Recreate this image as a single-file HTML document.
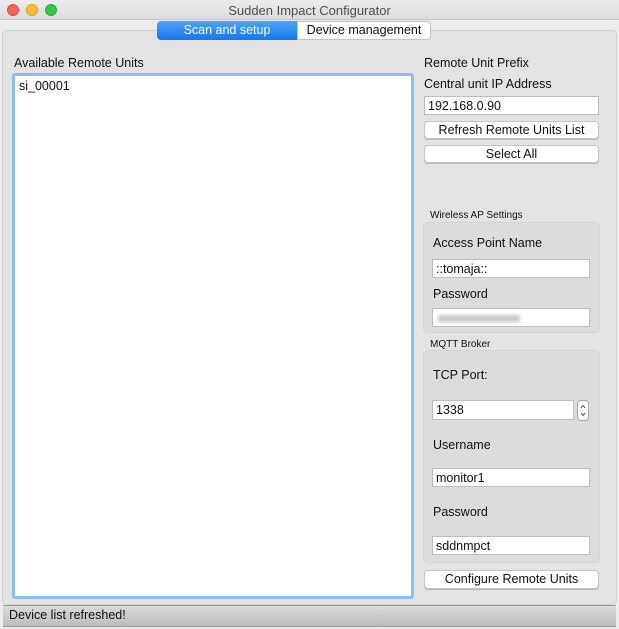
<!DOCTYPE html>
<html><head><style>
*{margin:0;padding:0;box-sizing:border-box}
body{width:619px;height:629px;background:#ececec;font-family:"Liberation Sans",sans-serif;font-size:12.5px;color:#111;position:relative;overflow:hidden}
.a{position:absolute;white-space:nowrap}
.dot{position:absolute;width:12px;height:12px;border-radius:50%;top:4px}
.in{position:absolute;background:#fff;border:1px solid #bdbdbd;padding:1px 0 0 3px;font-size:12.5px;line-height:16px}
.btn{position:absolute;background:#fff;border:1px solid #c4c4c4;border-radius:4px;text-align:center;font-size:12.5px;line-height:16px;box-shadow:0 1px 0 #bbb}
.grp{position:absolute;background:#dcdcdc;border:1px solid #d2d2d2;border-radius:5px}
.sm{font-size:10px}
</style></head><body>
<div class="a" style="left:0;top:0;width:619px;height:20px;background:linear-gradient(#ececec,#dcdcdc);border-bottom:1px solid #c8c8c8"></div>
<div class="dot" style="left:7px;background:#fc5f57;border:1px solid #de4a42"></div>
<div class="dot" style="left:26px;background:#fdbc2e;border:1px solid #dea123"></div>
<div class="dot" style="left:45px;background:#33c748;border:1px solid #27aa35"></div>
<div class="a" style="left:0;width:619px;top:3px;text-align:center;color:#4d4d4d;font-size:13px">Sudden Impact Configurator</div>
<div class="a" style="left:2px;top:30px;width:615px;height:575px;background:#e3e3e3;border:1px solid #cfcfcf;border-radius:5px"></div>
<div class="a" style="left:157px;top:21px;width:140px;height:19px;background:linear-gradient(#4fa3f8,#1277f0);border-radius:4px 0 0 4px;color:#fff;text-align:center;line-height:18px;font-size:12.5px">Scan and setup</div>
<div class="a" style="left:297px;top:21px;width:134px;height:19px;background:#fff;border:1px solid #c4c4c4;border-radius:0 4px 4px 0;text-align:center;line-height:17px;font-size:12.5px">Device management</div>
<div class="a" style="left:14px;top:56px">Available Remote Units</div>
<div class="a" style="left:12px;top:73px;width:402px;height:526px;background:#fff;border:3px solid #8fbcf2;border-radius:3px"></div>
<div class="a" style="left:19px;top:79px">si_00001</div>
<div class="a" style="left:424px;top:56px">Remote Unit Prefix</div>
<div class="a" style="left:424px;top:77px">Central unit IP Address</div>
<div class="in" style="left:424px;top:96px;width:175px;height:19px">192.168.0.90</div>
<div class="btn" style="left:424px;top:121px;width:175px;height:18px">Refresh Remote Units List</div>
<div class="btn" style="left:424px;top:145px;width:175px;height:18px">Select All</div>
<div class="a sm" style="left:430px;top:210px">Wireless AP Settings</div>
<div class="grp" style="left:423px;top:222px;width:177px;height:111px"></div>
<div class="a" style="left:433px;top:236px">Access Point Name</div>
<div class="in" style="left:432px;top:259px;width:158px;height:19px">::tomaja::</div>
<div class="a" style="left:433px;top:287px">Password</div>
<div class="in" style="left:432px;top:308px;width:158px;height:19px"><div style="margin:5px 0 0 2px;width:82px;height:7px;background:#c8c8c8;filter:blur(1.5px)"></div></div>
<div class="a sm" style="left:430px;top:339px">MQTT Broker</div>
<div class="grp" style="left:423px;top:350px;width:177px;height:213px"></div>
<div class="a" style="left:433px;top:368px">TCP Port:</div>
<div class="in" style="left:432px;top:400px;width:142px;height:20px">1338</div>
<div class="a" style="left:577px;top:400px;width:12px;height:21px;background:#fff;border:1px solid #aaa;border-radius:4px"><svg width="10" height="19" style="position:absolute;left:0;top:0"><path d="M3 7l2-2.5 2 2.5M3 12l2 2.5 2-2.5" fill="none" stroke="#444" stroke-width="1"/></svg></div>
<div class="a" style="left:433px;top:438px">Username</div>
<div class="in" style="left:432px;top:468px;width:158px;height:19px">monitor1</div>
<div class="a" style="left:433px;top:505px">Password</div>
<div class="in" style="left:432px;top:536px;width:158px;height:19px">sddnmpct</div>
<div class="btn" style="left:424px;top:570px;width:175px;height:19px">Configure Remote Units</div>
<div class="a" style="left:3px;top:605px;width:613px;height:22px;background:linear-gradient(#dadada,#bcbcbc);border-top:1px solid #999;border-bottom:1px solid #999"></div>
<div class="a" style="left:9px;top:608px">Device list refreshed!</div>
</body></html>
